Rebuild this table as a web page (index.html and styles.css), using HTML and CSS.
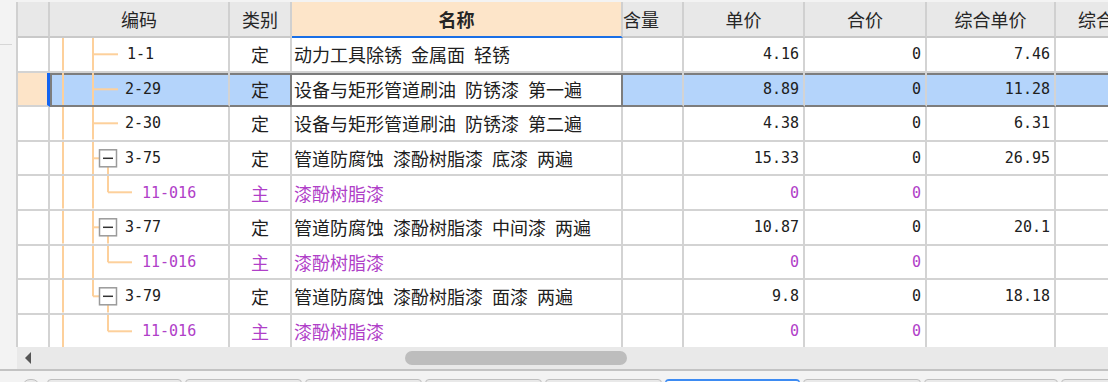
FILE: index.html
```html
<!DOCTYPE html>
<html lang="zh-CN">
<head>
<meta charset="utf-8">
<title>定额表</title>
<link rel="stylesheet" href="styles.css">
</head>
<body>
<div class="app">
  <div class="main">
    <div class="side"><div class="side-mark"></div></div>
    <div class="grid">
      <div class="row head">
        <div class="c rh"></div>
        <div class="c">编码</div>
        <div class="c">类别</div>
        <div class="c hn">名称</div>
        <div class="c hl">含量</div>
        <div class="c">单价</div>
        <div class="c">合价</div>
        <div class="c">综合单价</div>
        <div class="c">综合合价</div>
      </div>

      <div class="row">
        <div class="c rh"></div>
        <div class="c code"><svg class="tree" width="77"><line x1="13" y1="0" x2="13" y2="100%"/><line x1="43" y1="0" x2="43" y2="100%"/><line x1="43" y1="50%" x2="68" y2="50%"/></svg><span class="cd">1-1</span></div>
        <div class="c type">定</div>
        <div class="c name">动力工具除锈 金属面 轻锈</div>
        <div class="c"></div>
        <div class="c num">4.16</div>
        <div class="c num">0</div>
        <div class="c num">7.46</div>
        <div class="c"></div>
      </div>

      <div class="row s">
        <div class="c rh"></div>
        <div class="c code"><svg class="tree" width="75"><line x1="13" y1="0" x2="13" y2="100%"/><line x1="43" y1="0" x2="43" y2="100%"/><line x1="43" y1="50%" x2="68" y2="50%"/></svg><span class="cd">2-29</span></div>
        <div class="c type">定</div>
        <div class="c name">设备与矩形管道刷油 防锈漆 第一遍</div>
        <div class="c"></div>
        <div class="c num">8.89</div>
        <div class="c num">0</div>
        <div class="c num">11.28</div>
        <div class="c"></div>
      </div>

      <div class="row">
        <div class="c rh"></div>
        <div class="c code"><svg class="tree" width="75"><line x1="13" y1="0" x2="13" y2="100%"/><line x1="43" y1="0" x2="43" y2="100%"/><line x1="43" y1="50%" x2="68" y2="50%"/></svg><span class="cd">2-30</span></div>
        <div class="c type">定</div>
        <div class="c name">设备与矩形管道刷油 防锈漆 第二遍</div>
        <div class="c"></div>
        <div class="c num">4.38</div>
        <div class="c num">0</div>
        <div class="c num">6.31</div>
        <div class="c"></div>
      </div>

      <div class="row">
        <div class="c rh"></div>
        <div class="c code"><svg class="tree" width="75"><line x1="13" y1="0" x2="13" y2="100%"/><line x1="43" y1="0" x2="43" y2="100%"/><line x1="43" y1="50%" x2="49" y2="50%"/><line x1="58" y1="50%" x2="58" y2="100%"/><svg y="50%" overflow="visible"><rect class="bx" x="49.5" y="-8.5" width="17" height="17"/><line class="mn" x1="53" y1="0" x2="63" y2="0"/></svg></svg><span class="cd">3-75</span></div>
        <div class="c type">定</div>
        <div class="c name">管道防腐蚀 漆酚树脂漆 底漆 两遍</div>
        <div class="c"></div>
        <div class="c num">15.33</div>
        <div class="c num">0</div>
        <div class="c num">26.95</div>
        <div class="c"></div>
      </div>

      <div class="row m">
        <div class="c rh"></div>
        <div class="c code"><svg class="tree" width="92"><line x1="13" y1="0" x2="13" y2="100%"/><line x1="43" y1="0" x2="43" y2="100%"/><line x1="58" y1="0" x2="58" y2="50%"/><line x1="58" y1="50%" x2="82" y2="50%"/></svg><span class="cd">11-016</span></div>
        <div class="c type">主</div>
        <div class="c name">漆酚树脂漆</div>
        <div class="c"></div>
        <div class="c num">0</div>
        <div class="c num">0</div>
        <div class="c num"></div>
        <div class="c"></div>
      </div>

      <div class="row">
        <div class="c rh"></div>
        <div class="c code"><svg class="tree" width="75"><line x1="13" y1="0" x2="13" y2="100%"/><line x1="43" y1="0" x2="43" y2="100%"/><line x1="43" y1="50%" x2="49" y2="50%"/><line x1="58" y1="50%" x2="58" y2="100%"/><svg y="50%" overflow="visible"><rect class="bx" x="49.5" y="-8.5" width="17" height="17"/><line class="mn" x1="53" y1="0" x2="63" y2="0"/></svg></svg><span class="cd">3-77</span></div>
        <div class="c type">定</div>
        <div class="c name">管道防腐蚀 漆酚树脂漆 中间漆 两遍</div>
        <div class="c"></div>
        <div class="c num">10.87</div>
        <div class="c num">0</div>
        <div class="c num">20.1</div>
        <div class="c"></div>
      </div>

      <div class="row m">
        <div class="c rh"></div>
        <div class="c code"><svg class="tree" width="92"><line x1="13" y1="0" x2="13" y2="100%"/><line x1="43" y1="0" x2="43" y2="100%"/><line x1="58" y1="0" x2="58" y2="50%"/><line x1="58" y1="50%" x2="82" y2="50%"/></svg><span class="cd">11-016</span></div>
        <div class="c type">主</div>
        <div class="c name">漆酚树脂漆</div>
        <div class="c"></div>
        <div class="c num">0</div>
        <div class="c num">0</div>
        <div class="c num"></div>
        <div class="c"></div>
      </div>

      <div class="row">
        <div class="c rh"></div>
        <div class="c code"><svg class="tree" width="75"><line x1="13" y1="0" x2="13" y2="100%"/><line x1="43" y1="0" x2="43" y2="50%"/><line x1="43" y1="50%" x2="49" y2="50%"/><line x1="58" y1="50%" x2="58" y2="100%"/><svg y="50%" overflow="visible"><rect class="bx" x="49.5" y="-8.5" width="17" height="17"/><line class="mn" x1="53" y1="0" x2="63" y2="0"/></svg></svg><span class="cd">3-79</span></div>
        <div class="c type">定</div>
        <div class="c name">管道防腐蚀 漆酚树脂漆 面漆 两遍</div>
        <div class="c"></div>
        <div class="c num">9.8</div>
        <div class="c num">0</div>
        <div class="c num">18.18</div>
        <div class="c"></div>
      </div>

      <div class="row m">
        <div class="c rh"></div>
        <div class="c code"><svg class="tree" width="92"><line x1="13" y1="0" x2="13" y2="100%"/><line x1="58" y1="0" x2="58" y2="50%"/><line x1="58" y1="50%" x2="82" y2="50%"/></svg><span class="cd">11-016</span></div>
        <div class="c type">主</div>
        <div class="c name">漆酚树脂漆</div>
        <div class="c"></div>
        <div class="c num">0</div>
        <div class="c num">0</div>
        <div class="c num"></div>
        <div class="c"></div>
      </div>
    </div>
  </div>

  <div class="hscroll">
    <div class="sb-arrow"></div>
    <div class="sb-thumb"></div>
  </div>

  <div class="bottom">
    <div class="tabs">
      <div class="tab small"></div>
      <div class="tab w135"></div>
      <div class="tab w117"></div>
      <div class="tab w117"></div>
      <div class="tab w117"></div>
      <div class="tab w117"></div>
      <div class="tab w135 active"></div>
      <div class="tab w118"></div>
      <div class="tab w134"></div>
      <div class="tab w135"></div>
    </div>
  </div>
</div>
</body>
</html>
```

FILE: styles.css
```css
html, body {
  margin: 0;
  padding: 0;
}

body {
  background: #f3f3f3;
  font-family: "Noto Sans CJK SC", sans-serif;
  color: #202020;
  overflow: hidden;
}

.app {
  width: 1108px;
  height: 382px;
  display: flex;
  flex-direction: column;
  overflow: hidden;
}

.main {
  height: 347px;
  flex: none;
  display: flex;
}

.side {
  width: 16px;
  flex: none;
}

.side-mark {
  margin-top: 44px;
  width: 12px;
  height: 1px;
  background: #d6d6d6;
}

.grid {
  flex: 1;
  min-width: 0;
  margin-top: 2px;
  border-left: 2px solid #d0d0d0;
  background: #fff;
  overflow: hidden;
}

.row {
  display: grid;
  grid-template-columns: 32px 180px 62px 331px 61px 121px 122px 129px 118px;
  height: 34.6px;
}

.row.head {
  height: 36px;
}

.c {
  box-sizing: border-box;
  min-width: 0;
  border-right: 2px solid #d3d3d3;
  border-bottom: 2px solid #d3d3d3;
  display: flex;
  align-items: center;
  overflow: hidden;
  white-space: nowrap;
  font-size: 18px;
}

.head .c {
  background: #e8e8e8;
  justify-content: center;
  color: #262626;
  border-bottom-color: #c9c9c9;
  border-right-color: #d0d0d0;
}

.head .hn {
  background: #fde5c9;
  font-weight: 700;
  border-bottom-color: #1a6fe6;
}

.head .hl {
  justify-content: flex-start;
}

.type {
  justify-content: center;
}

.name {
  padding-left: 2px;
  word-spacing: 5px;
}

.num {
  justify-content: flex-end;
  padding-right: 4px;
  font-family: "DejaVu Sans Mono", "Liberation Mono", monospace;
  font-size: 15px;
}

.cd {
  font-family: "DejaVu Sans Mono", "Liberation Mono", monospace;
  font-size: 15px;
}

.tree {
  flex: none;
  display: block;
  height: 32.6px;
}

.tree line {
  stroke: #fdd09b;
  stroke-width: 2;
}

.tree .bx {
  fill: #fff;
  stroke: #9a9a9a;
  stroke-width: 1.5;
}

.tree .mn {
  stroke: #333;
  stroke-width: 1.5;
}

.row.m .c {
  color: #b040c8;
}

/* selected row */
.row.s .c {
  background: #b4d4fb;
  border-bottom-color: #7d7d7d;
  box-shadow: inset 0 2px 0 #7d7d7d;
}

.row.s .rh {
  background: #fde4c8;
  border-bottom-color: #d3d3d3;
  border-right: 3px solid #1464f0;
  box-shadow: none;
}

.row.s .code {
  box-shadow: inset 0 2px 0 #7d7d7d, inset 2px 0 0 #7d7d7d;
}

.row.s .type {
  border-right-color: #7d7d7d;
}

.row.s .name {
  background: #fff;
  border-right-color: #7d7d7d;
}

/* horizontal scrollbar */
.hscroll {
  flex: none;
  height: 22px;
  margin-left: 17px;
  background: #e9e9e9;
  display: flex;
  align-items: center;
}

.sb-arrow {
  margin-left: 8px;
  width: 0;
  height: 0;
  border-top: 6px solid transparent;
  border-bottom: 6px solid transparent;
  border-right: 6px solid #555;
}

.sb-thumb {
  margin-left: 374px;
  width: 222px;
  height: 14px;
  border-radius: 7px;
  background: #bdbdbd;
}

/* bottom tab strip */
.bottom {
  flex: 1;
  border-top: 2px solid #c3c3c3;
  background: #f3f3f3;
  overflow: hidden;
}

.tabs {
  display: flex;
  gap: 3px;
  padding-top: 8px;
  padding-left: 22px;
}

.tab {
  flex: none;
  height: 20px;
  box-sizing: border-box;
  border: 1px solid #bfbfbf;
  border-radius: 4px 4px 0 0;
  background: #e9e9e9;
}

.tab.small {
  width: 18px;
  margin-right: 4px;
  border-radius: 8px 8px 0 0;
}

.tab.w117 { width: 117px; }
.tab.w118 { width: 118px; }
.tab.w134 { width: 134px; }
.tab.w135 { width: 135px; }

.tab.active {
  border-color: #3d8bf2;
  border-top-width: 2px;
  background: #fff;
}
```
